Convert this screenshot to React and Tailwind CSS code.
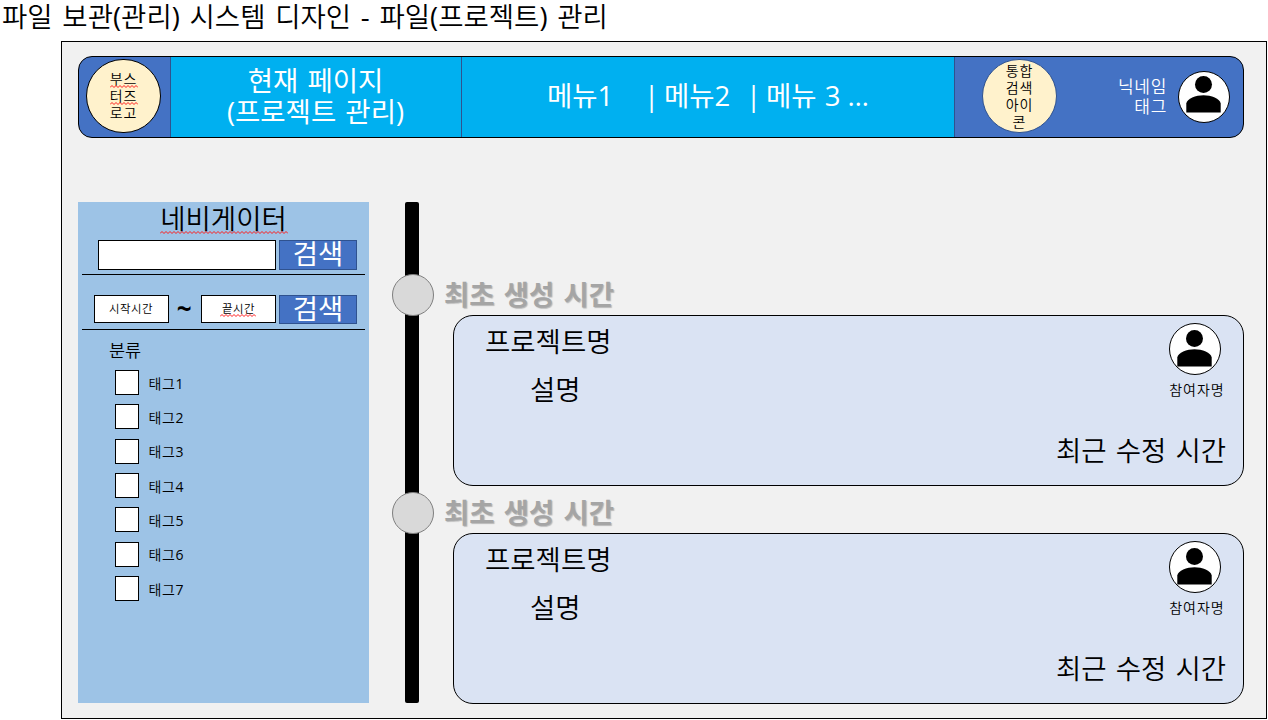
import React from "react";

function PersonIcon() {
  return (
    <svg className="-ml-px" width="35" height="37" viewBox="0 0 35 37" fill="black">
      <circle cx="17.5" cy="8.5" r="8.5" />
      <path d="M0.3 36.5V27.5C0.8 22.5 10 19.2 17.5 19.2S34.2 22.5 34.7 27.5V36.5Z" />
    </svg>
  );
}

function Avatar({ className }) {
  return (
    <div className={`flex size-[52px] shrink-0 justify-center rounded-full border border-black bg-white ${className}`}>
      <PersonIcon />
    </div>
  );
}

// Digits and punctuation take the regular weight, Hangul keeps the lighter one.
function Mixed({ text }) {
  return text.split(/([0-9()-]+)/).map((part, i) =>
    i % 2 ? (
      <span key={i} className="font-normal">
        {part}
      </span>
    ) : (
      part
    )
  );
}

function Misspelled({ children, width, offset }) {
  let d = "M0 2.5";
  for (let x = 2, up = true; x <= width; x += 2, up = !up) d += `L${x} ${up ? 0.5 : 2.5}`;
  return (
    <span className="relative block">
      {children}
      <svg
        className="absolute left-1/2 -translate-x-1/2"
        style={{ top: offset }}
        width={width}
        height="3"
        viewBox={`0 0 ${width} 3`}
      >
        <path d={d} fill="none" stroke="#ff1a1a" strokeWidth="1" />
      </svg>
    </span>
  );
}

function SearchButton({ className }) {
  return (
    <button
      className={`flex w-[78px] items-center justify-center border border-[#2f528f] bg-[#4472c4] pb-[2px] text-[27.5px] leading-none font-normal text-white ${className}`}
    >
      검색
    </button>
  );
}

function Header() {
  return (
    <header className="flex h-[82px] overflow-hidden rounded-[14px] border border-black bg-[#4472c4]">
      <div className="flex w-[91px] shrink-0 items-start pt-[2px] pl-[7px]">
        <div className="flex h-[74px] w-[75px] flex-col items-center justify-center rounded-full border border-black bg-[#fff2cc] pb-[2px] text-[14px] leading-[17px] tracking-[0.9px] text-black">
          <Misspelled width={28} offset={15}>부스</Misspelled>
          <Misspelled width={28} offset={15}>터즈</Misspelled>
          <span>로고</span>
        </div>
      </div>
      <div className="-my-px flex w-[292px] shrink-0 flex-col items-center justify-center border border-[#2f528f] bg-[#00b0f0] pr-px pb-[2px] text-[27.5px] leading-[31px] font-normal text-white [word-spacing:2px]">
        <span>현재 페이지</span>
        <span>(프로젝트 관리)</span>
      </div>
      <nav className="-my-px -ml-px flex w-[494px] shrink-0 items-center border border-[#2f528f] bg-[#00b0f0] pb-[2px] pl-[85px] text-[27.5px] leading-none font-normal whitespace-pre text-white [word-spacing:2px]">
        <span className="w-[97px]">메뉴1</span>
        <span className="w-[20px]">|</span>
        <span className="w-[82px]">메뉴2</span>
        <span className="w-[20px]">|</span>
        <span>
          메뉴<span className="tracking-[-1px]"> 3 …</span>
        </span>
      </nav>
      <div className="flex flex-1 items-start">
        <div className="mt-[2px] ml-[27px] flex h-[74px] w-[75px] flex-col items-center justify-center rounded-full border border-[#2f528f] bg-[#fff2cc] pb-px text-[14px] leading-[17px] tracking-[0.9px] text-black">
          <span>통합</span>
          <span>검색</span>
          <span>아이</span>
          <span>콘</span>
        </div>
        <div className="mt-5 ml-auto text-right text-[17px] leading-5 tracking-[0.7px] text-white">
          <div>닉네임</div>
          <div>태그</div>
        </div>
        <Avatar className="mt-[14px] mr-[13px] ml-[11px] pt-1" />
      </div>
    </header>
  );
}

const tags = ["태그1", "태그2", "태그3", "태그4", "태그5", "태그6", "태그7"];

function Navigator() {
  return (
    <aside className="flex h-[501px] w-[291px] shrink-0 flex-col bg-[#9dc3e6]">
      <h2 className="flex h-[38px] items-center justify-center pb-[6px] text-[27.5px] leading-[31px] font-[350]">
        <Misspelled width={128} offset={28}>네비게이터</Misspelled>
      </h2>
      <div className="mx-1 flex h-[35px] gap-[3px] border-b border-black pl-4">
        <div className="h-[30px] w-[178px] border border-black bg-white" />
        <SearchButton className="h-[30px]" />
      </div>
      <div className="mx-1 flex h-[55px] border-b border-black pt-5 pl-3 text-[11.4px] leading-[17px] tracking-[0.5px]">
        <div className="flex h-[28px] w-[75px] items-center justify-center border border-black bg-white pr-px pb-[2px]">시작시간</div>
        <div className="flex h-[28px] w-8 items-center justify-center pr-px pb-[2px] text-[26px] font-bold">~</div>
        <div className="flex h-[28px] w-[75px] items-center justify-center border border-black bg-white pb-[2px]">
          <Misspelled width={36} offset={14}>끝시간</Misspelled>
        </div>
        <SearchButton className="ml-[3px] h-[29px] tracking-normal" />
      </div>
      <div className="mt-[9px] pl-[31px] text-[17.5px] leading-[22px]">분류</div>
      <ul className="mt-[9px] flex flex-col gap-[9.35px] pl-[37px]">
        {tags.map((tag) => (
          <li key={tag} className="flex h-[25px] items-center text-[14px] leading-none">
            <span className="h-[25px] w-6 border border-black bg-white" />
            <span className="ml-[9.5px] pt-[2px] tracking-[0.6px]">
              <Mixed text={tag} />
            </span>
          </li>
        ))}
      </ul>
    </aside>
  );
}

function TimelineEntry() {
  return (
    <article className="relative">
      <div className="flex h-[41px] items-center gap-[10px]">
        <span className="h-[42px] w-[42px] self-start rounded-full border border-[#7f7f7f] bg-[#d9d9d9]" />
        <span className="text-[27.5px] leading-none font-bold text-[#a5a5a5] [text-shadow:1px_1px_1px_#b8b8b8] [word-spacing:2px]">
          최초 생성 시간
        </span>
      </div>
      <div className="ml-[61px] flex h-[171px] justify-between rounded-[20px] border border-black bg-[#dae3f3] text-[27.5px] leading-[32px]">
        <div className="pt-[10px] pl-[31px]">
          <div>프로젝트명</div>
          <div className="mt-4 pl-[45px]">설명</div>
        </div>
        <div className="flex flex-col items-end pt-[7px] pr-[17px]">
          <div className="mr-px flex flex-col items-center">
            <Avatar className="mr-[4px] pt-[6px]" />
            <span className="mt-[5px] text-[14px] leading-5 tracking-[1px]">참여자명</span>
          </div>
          <div className="mt-[35px] [word-spacing:2px]">최근 수정 시간</div>
        </div>
      </div>
    </article>
  );
}

export default function App() {
  return (
    <div className="h-[720px] w-[1268px] overflow-hidden bg-white font-['Open_Sans','Noto_Sans_CJK_KR',sans-serif] font-[350] text-black">
      <h1 className="h-[41px] pl-[2px] text-[27.5px] leading-[34px] font-[350] whitespace-nowrap [word-spacing:2.6px]">
        <Mixed text="파일 보관(관리) 시스템 디자인 - 파일(프로젝트) 관리" />
      </h1>
      <div className="ml-[61px] h-[678px] w-[1206px] border border-black bg-[#f1f1f1] pt-[14px] pr-[22px] pl-4">
        <Header />
        <main className="mt-16 flex">
          <Navigator />
          <section className="relative ml-[23px] flex h-[502px] flex-1 flex-col gap-[6px] pt-[72px]">
            <div className="absolute top-0 left-[13px] h-[501px] w-[14px] rounded-[2px] bg-black" />
            <TimelineEntry />
            <TimelineEntry />
          </section>
        </main>
      </div>
    </div>
  );
}
